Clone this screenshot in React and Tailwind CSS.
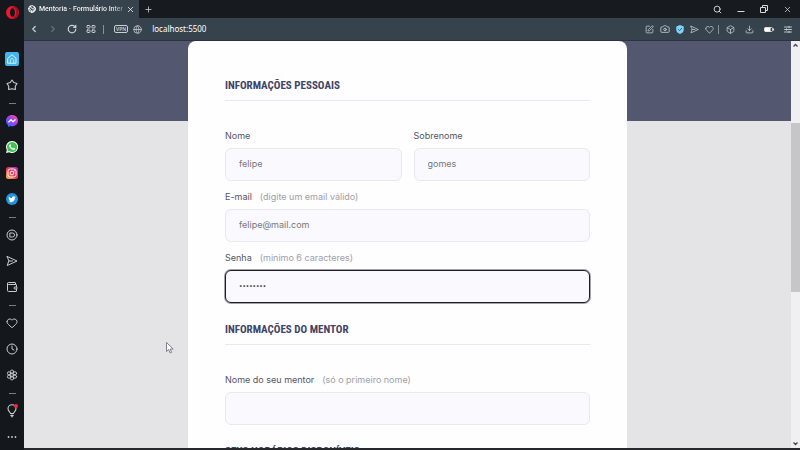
import React from "react";
import {
  ChevronLeft, ChevronRight, RotateCw, Globe, Search, X, Plus, SquarePen, Camera,
  Heart, Box, Download, Clock, Wallet, Earth,
} from "lucide-react";

const stroke = { fill: "none", stroke: "currentColor", strokeLinecap: "round", strokeLinejoin: "round" };

function OperaLogo() {
  return (
    <svg viewBox="0 0 24 24" className="size-[13px]">
      <path fillRule="evenodd" fill="#f0182c" d="M12 0a12 12 0 1 0 0 24 12 12 0 0 0 0-24Zm0 4c3 0 4.600 3.600 4.600 8s-1.600 8-4.600 8-4.600-3.600-4.600-8S9 4 12 4Z" />
      <path fill="#a50e1f" d="M16 1c5 1.500 8 6 8 11s-3 9.500-8 11c-2 .5-4-.5-5-2 5 1 8-3 8-9s-3-10-8-9c1-1.500 3-2.500 5-2Z" />
    </svg>
  );
}

function HomeIcon() {
  return (
    <svg viewBox="0 0 14 14" className="size-[14px] rounded-xs bg-[#45b4ec] text-[#d8f3ff]">
      <path {...stroke} d="M3 6.200 7 2.800l4 3.400v5H3Z" />
      <path {...stroke} strokeWidth=".8" d="M5.300 11V7.700L7 6.200l1.700 1.500V11" />
    </svg>
  );
}

function StarIcon() {
  return (
    <svg viewBox="0 0 24 24" className="size-3">
      <path {...stroke} strokeWidth="2.200" d="m12 2 3.500 5 6.500 2-3.500 5.500.3 6.500-6.800-1.500L5.200 21l.3-6.500L2 9l6.500-2Z" />
    </svg>
  );
}

function MessengerIcon() {
  return (
    <svg viewBox="0 0 24 24" className="size-3">
      <defs>
        <linearGradient id="messenger" x1="0" y1="1" x2="1" y2="0">
          <stop offset="0" stopColor="#1677ff" />
          <stop offset=".5" stopColor="#9a3df5" />
          <stop offset="1" stopColor="#ff5c7c" />
        </linearGradient>
      </defs>
      <path fill="url(#messenger)" d="M12 0C5 0 0 5 0 11.500c0 3.500 1.500 6.500 4 8.500v4l4-2c1.300.4 2.600.5 4 .5 7 0 12-5 12-11S19 0 12 0Z" />
      <path fill="none" stroke="#fff" strokeWidth="2.600" strokeLinejoin="round" d="m5 14.500 5-5 4 4 5-4.500" />
    </svg>
  );
}

function WhatsappIcon() {
  return (
    <svg viewBox="0 0 24 24" className="size-3">
      <path fill="#fff" d="M12 0a12 12 0 0 0-10.300 18L0 24l6.200-1.600A12 12 0 1 0 12 0Z" />
      <path fill="#3fc351" d="M12 2a10 10 0 0 0-8.400 15.300L2.700 21l3.800-1A10 10 0 1 0 12 2Z" />
      <path fill="#fff" d="M8 6.500c.6-.3 1.100 0 1.400.6l.9 2c.2.600-.8 1.400-.8 1.700 1 2 2.500 3.300 4.500 4 .5 0 1.200-1.600 1.800-1.400l2.200 1c.8.400.4 1.700-.1 2.300-1.300 1.400-3.300 1.400-5.300.5-3-1.300-5.100-3.400-6.300-6.200-.5-1.600.200-3.700 1.700-4.500Z" />
    </svg>
  );
}

function InstagramIcon() {
  return (
    <svg viewBox="0 0 24 24" className="size-3">
      <defs>
        <linearGradient id="instagram" x1="0" y1="1" x2="1" y2="0">
          <stop offset="0" stopColor="#ffc24a" />
          <stop offset=".45" stopColor="#f4364c" />
          <stop offset="1" stopColor="#b32ec4" />
        </linearGradient>
      </defs>
      <rect width="24" height="24" rx="5" fill="url(#instagram)" />
      <rect x="4" y="4" width="16" height="16" rx="4.500" fill="none" stroke="#fff" strokeWidth="1.900" />
      <circle cx="12" cy="12" r="3.700" fill="none" stroke="#fff" strokeWidth="1.900" />
      <circle cx="16.500" cy="7.500" r="1" fill="#fff" />
    </svg>
  );
}

function TwitterIcon() {
  return (
    <svg viewBox="0 0 24 24" className="size-3">
      <circle cx="12" cy="12" r="12" fill="#1d94e0" />
      <path fill="#fff" d="M19.500 7.800c-.6.300-1.100.4-1.800.5.600-.4 1-1 1.300-1.700-.6.400-1.200.6-1.900.7a3.100 3.100 0 0 0-5.200 2.800c-2.500-.1-4.700-1.300-6.200-3.200-.8 1.400-.4 3.100.9 4.100-.5 0-1-.2-1.400-.4 0 1.500 1 2.700 2.400 3-.4.100-.9.200-1.400.1.400 1.200 1.500 2.100 2.900 2.100a6.200 6.200 0 0 1-4.500 1.300c5.600 3.500 13.400-.2 13.300-7.800.6-.4 1.200-.9 1.600-1.500Z" />
    </svg>
  );
}

function PlayerIcon() {
  return (
    <svg viewBox="0 0 24 24" className="size-3">
      <circle {...stroke} strokeWidth="2" cx="12" cy="12" r="10" />
      <path {...stroke} strokeWidth="2" d="M8.500 8h4.500a4 4 0 0 1 0 8H8.500Z" />
    </svg>
  );
}

function PlaneIcon({ className }) {
  return (
    <svg viewBox="0 0 24 24" className={className}>
      <path {...stroke} strokeWidth="2" d="M2.500 3 22 12 2.500 21l3-9Zm3 9H13" />
    </svg>
  );
}

function SettingsIcon() {
  return (
    <svg viewBox="0 0 24 24" className="size-3">
      <g {...stroke} strokeWidth="1.800">
        <circle cx="12" cy="12" r="3" />
        <circle cx="12" cy="5.200" r="3.200" />
        <circle cx="12" cy="18.800" r="3.200" />
        <circle cx="6" cy="8.600" r="3.200" />
        <circle cx="18" cy="8.600" r="3.200" />
        <circle cx="6" cy="15.400" r="3.200" />
        <circle cx="18" cy="15.400" r="3.200" />
      </g>
    </svg>
  );
}

function TipsIcon() {
  return (
    <svg viewBox="0 0 24 28" className="h-[14px] w-3">
      <path {...stroke} strokeWidth="2.200" d="M9 19c0-3-5-4.500-5-9.500a8 8 0 0 1 16 0c0 5-5 6.500-5 9.500Z" />
      <path {...stroke} strokeWidth="3" d="M10 23h4m-2 2.500v.2" />
      <circle cx="20" cy="4" r="4" fill="#f52a34" />
    </svg>
  );
}

function DotsIcon() {
  return (
    <svg viewBox="0 0 12 4" className="h-1 w-3" fill="currentColor">
      <circle cx="2.500" cy="2" r=".9" />
      <circle cx="6" cy="2" r=".9" />
      <circle cx="9.500" cy="2" r=".9" />
    </svg>
  );
}

function SpeedDialIcon() {
  return (
    <svg viewBox="0 0 10 10" className="size-[10px]">
      <g {...stroke}>
        <rect x="1" y="1.500" width="3" height="2.500" rx=".6" />
        <rect x="6" y="1.500" width="3" height="2.500" rx=".6" />
        <rect x="1" y="6" width="3" height="2.500" rx=".6" />
        <rect x="6" y="6" width="3" height="2.500" rx=".6" />
      </g>
    </svg>
  );
}

function ShieldIcon() {
  return (
    <svg viewBox="0 0 16 18" className="h-[9px] w-2">
      <path fill="#7fd3fb" d="m8 0 7.500 3v7c0 4-3.500 6.500-7.500 8C4 16.500.5 14 .5 10V3Z" />
      <path fill="none" stroke="#2f5e7a" strokeWidth="2" d="m4.500 8.500 2.700 2.800L12 6" />
    </svg>
  );
}

function BatteryIcon() {
  return (
    <svg viewBox="0 0 20 10" className="h-[5px] w-[10px]">
      <rect x="1" y="1" width="16" height="8" rx="2" fill="none" stroke="#e8edf0" strokeWidth="1.600" />
      <rect x="1" y="1" width="12" height="8" rx="1.500" fill="#fff" />
      <rect x="18" y="3" width="2" height="4" fill="#e8edf0" />
    </svg>
  );
}

function EasySetupIcon() {
  return (
    <svg viewBox="0 0 16 14" className="h-[7px] w-2">
      <path {...stroke} strokeWidth="1.800" d="M1 2h14M1 7h14M1 12h14M10 .5v3M5 5.500v3M10 10.500v3" />
    </svg>
  );
}

function RestoreIcon() {
  return (
    <svg viewBox="0 0 8 8" className="size-2">
      <path fill="none" stroke="currentColor" d="M.5 2.500h5v5h-5ZM2.500 2.500v-2h5v5h-2" />
    </svg>
  );
}

function MinimizeIcon() {
  return (
    <svg viewBox="0 0 8 8" className="size-2">
      <path fill="none" stroke="currentColor" d="M.5 6.500h7" />
    </svg>
  );
}

const sidebarGroups = [
  [["Início", <HomeIcon />], ["Favoritos", <StarIcon />]],
  [["Messenger", <MessengerIcon />], ["WhatsApp", <WhatsappIcon />], ["Instagram", <InstagramIcon />], ["Twitter", <TwitterIcon />]],
  [["Player", <PlayerIcon />], ["Meu fluxo", <PlaneIcon className="size-3" />], ["Carteira", <Wallet className="size-3" />]],
  [["Marcadores", <Heart className="size-3" />], ["Histórico", <Clock className="size-3" />], ["Configurações", <SettingsIcon />]],
  [["Dicas", <TipsIcon />], ["Mais", <DotsIcon />]],
];

function Sidebar() {
  return (
    <aside className="flex w-6 shrink-0 flex-col items-center bg-[#14181c] text-[#c9cdd0]">
      <button aria-label="Opera" className="flex h-6 w-full items-center justify-center"><OperaLogo /></button>
      <nav className="mt-[22px] flex w-full flex-col">
        {sidebarGroups.map((group, i) => (
          <React.Fragment key={i}>
            {i > 0 && (
              <div className="flex h-[10px] items-center justify-center">
                <div className="h-px w-[7px] bg-[#777c80]" />
              </div>
            )}
            {group.map(([label, icon]) => (
              <button key={label} aria-label={label} className="flex h-[26px] items-center justify-center">{icon}</button>
            ))}
          </React.Fragment>
        ))}
      </nav>
    </aside>
  );
}

function TabBar() {
  return (
    <div className="flex h-[18px] items-center justify-between bg-[#171b20]">
      <div className="flex h-full items-center">
        <div className="flex h-full items-center gap-[3px] bg-[#36424c] px-1 text-white">
          <Earth className="size-2 shrink-0" strokeWidth={3} />
          <span className="min-w-[84px] bg-linear-to-r from-white from-85% to-[#7b868f] bg-clip-text font-['Roboto',sans-serif] text-[7px] font-medium whitespace-nowrap text-transparent">
            Mentoria - Formulário Inter
          </span>
          <button aria-label="Fechar aba"><X className="size-[9px]" /></button>
        </div>
        <button aria-label="Nova aba" className="ml-[5px] text-[#d7dadc]"><Plus className="size-[9px]" /></button>
      </div>
      <div className="flex items-center gap-[15px] pr-2 text-[#d7dadc]">
        <button aria-label="Pesquisar"><Search className="size-[9px]" strokeWidth={2.5} /></button>
        <button aria-label="Minimizar"><MinimizeIcon /></button>
        <button aria-label="Restaurar"><RestoreIcon /></button>
        <button aria-label="Fechar"><X className="size-[9px]" /></button>
      </div>
    </div>
  );
}

function Toolbar() {
  return (
    <div className="flex h-[23px] items-center justify-between border-b border-[#2c333e] bg-[#36424c] text-[#c9d0d5]">
      <div className="flex items-center">
        <div className="flex items-center gap-[9px] pl-[5px]">
          <button aria-label="Voltar"><ChevronLeft className="size-[10px]" strokeWidth={3} /></button>
          <button aria-label="Avançar" className="text-[#66727b]"><ChevronRight className="size-[10px]" strokeWidth={3} /></button>
          <button aria-label="Recarregar"><RotateCw className="size-[10px]" strokeWidth={3} /></button>
          <button aria-label="Speed dial"><SpeedDialIcon /></button>
        </div>
        <div className="ml-[7px] h-[9px] w-px bg-[#87919a]" />
        <button className="ml-[10px] h-2 rounded-xs border border-[#c9d0d5] px-px font-['Noto_Sans',sans-serif] text-[5px] leading-[6px] font-semibold">VPN</button>
        <Globe className="ml-[5px] size-[9px]" />
        <input
          aria-label="Endereço"
          defaultValue="localhost:5500"
          className="ml-[10px] w-40 bg-transparent font-['Noto_Sans',sans-serif] text-[8px] text-white outline-none"
        />
      </div>
      <div className="flex items-center pr-2">
        <div className="flex items-center gap-[6px]">
          <button aria-label="Editar"><SquarePen className="size-[9px]" /></button>
          <button aria-label="Captura"><Camera className="size-[10px]" /></button>
          <button aria-label="Proteção"><ShieldIcon /></button>
          <button aria-label="Enviar"><PlaneIcon className="size-[9px]" /></button>
          <button aria-label="Favoritar"><Heart className="size-[9px]" /></button>
        </div>
        <div className="ml-1 h-[9px] w-px bg-[#87919a]" />
        <div className="ml-[7px] flex items-center gap-[10px]">
          <button aria-label="Extensões"><Box className="size-[9px]" /></button>
          <button aria-label="Downloads"><Download className="size-[9px]" /></button>
          <button aria-label="Bateria"><BatteryIcon /></button>
          <button aria-label="Configuração rápida"><EasySetupIcon /></button>
        </div>
      </div>
    </div>
  );
}

function Field({ id, label, hint, focused, ...input }) {
  return (
    <div className="flex min-w-0 flex-1 flex-col gap-1">
      <label htmlFor={id} className="flex gap-2 text-[9px] leading-4 text-[#55555d]">
        {label}
        {hint && <span className="text-[#a0a0a5]">{hint}</span>}
      </label>
      <input
        id={id}
        className={
          "h-[33px] w-full rounded-md border bg-[#faf9fe] px-[13px] pb-[2px] outline-none " +
          (focused ? "border-[#1d1d25] text-[6px] text-[#33333b] ring-1 ring-[#1d1d25]/40" : "border-[#e9e8ee] text-[9px] text-[#77777c]")
        }
        {...input}
      />
    </div>
  );
}

function Section({ title, children }) {
  return (
    <section>
      <h2 className="border-b border-[#e9e8ee] pb-1 font-['Roboto_Condensed','Open_Sans_Condensed','Noto_Sans_Condensed','Roboto',sans-serif] text-[11px] leading-5 font-bold whitespace-nowrap text-[#3d4466] uppercase">
        {title}
      </h2>
      <div className="mt-[27px] flex flex-col gap-2">{children}</div>
    </section>
  );
}

function MentoringForm() {
  return (
    <form className="mx-auto -mt-20 flex w-[439px] max-w-full flex-col gap-[17px] rounded-t-lg bg-[#fefdff] px-[37px] pt-[35px] pb-10">
      <Section title="Informações pessoais">
        <div className="flex gap-3">
          <Field id="nome" label="Nome" defaultValue="felipe" />
          <Field id="sobrenome" label="Sobrenome" defaultValue="gomes" />
        </div>
        <Field id="email" label="E-mail" hint="(digite um email válido)" type="email" defaultValue="felipe@mail.com" />
        <Field id="senha" label="Senha" hint="(minimo 6 caracteres)" type="password" defaultValue="12345678" focused />
      </Section>
      <Section title="Informações do mentor">
        <Field id="mentor" label="Nome do seu mentor" hint="(só o primeiro nome)" />
      </Section>
      <Section title="Seus horários disponíveis" />
    </form>
  );
}

function Scrollbar() {
  return (
    <div className="flex w-[9px] shrink-0 flex-col items-center bg-[#f0eff1] text-[#44444a]">
      <svg viewBox="0 0 9 9" className="size-[9px]"><path d="m2.500 5.500 2-2 2 2" fill="none" stroke="currentColor" strokeWidth="1.300" /></svg>
      <div className="flex w-full flex-1 flex-col">
        <div className="flex-[73]" />
        <div className="w-full flex-[170] bg-[#c6c5c8]" />
        <div className="flex-[147]" />
      </div>
      <svg viewBox="0 0 9 9" className="size-[9px]"><path d="m2.500 3.500 2 2 2-2" fill="none" stroke="currentColor" strokeWidth="1.300" /></svg>
    </div>
  );
}

function MousePointer() {
  return (
    <svg viewBox="0 0 8 12" className="absolute top-[342px] left-[166px] h-3 w-2">
      <path d="M.5.500v9l2.200-2 1.500 3.500 1.400-.6L4.200 7h3Z" fill="#fff" stroke="#55555a" strokeWidth=".7" />
    </svg>
  );
}

export default function App() {
  return (
    <div className="relative flex h-screen overflow-hidden font-['Inter',sans-serif]">
      <Sidebar />
      <div className="flex min-w-0 flex-1 flex-col">
        <TabBar />
        <Toolbar />
        <div className="flex min-h-0 flex-1 border-b-2 border-[#26282d]">
          <main className="min-w-0 flex-1 overflow-hidden bg-[#e4e3e6]">
            <div className="h-20 bg-[#535770]" />
            <MentoringForm />
          </main>
          <Scrollbar />
        </div>
      </div>
      <MousePointer />
    </div>
  );
}
